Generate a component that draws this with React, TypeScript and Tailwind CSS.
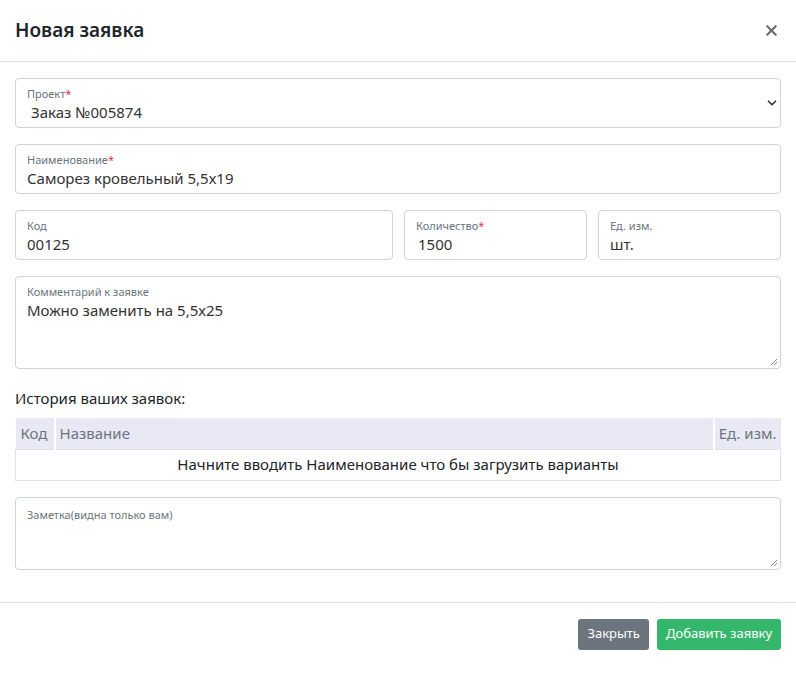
import { ChevronDown, X } from "lucide-react";

const font = { fontFamily: '"Noto Sans", "Open Sans", sans-serif' };

const Grip = () => (
  <svg className="absolute right-[2px] bottom-[2px]" width="8" height="8" viewBox="0 0 8 8">
    <path d="M7 1 L1 7 M7 4 L4 7" stroke="#8a8a8a" strokeWidth="1" />
  </svg>
);

const Field = ({
  label,
  value,
  required,
  className = "",
  valueClass = "",
}: {
  label: string;
  value: string;
  required?: boolean;
  className?: string;
  valueClass?: string;
}) => (
  <div className={`h-[50px] rounded-[4px] border border-[#ced4da] bg-white px-[11px] pt-[8px] ${className}`}>
    <div className="text-[11px] leading-[14px] text-[#6c757d]">
      {label}
      {required && <span className="text-[#dc3545]">*</span>}
    </div>
    <div className={`mt-[1px] text-[15px] leading-[20px] text-[#333] ${valueClass}`}>{value}</div>
  </div>
);

export default function App() {
  return (
    <div className="min-h-[679px] w-[796px] bg-white text-[#212529]" style={font}>
      {/* header */}
      <div className="flex h-[62px] items-center justify-between border-b border-[#dee2e6] px-[15px]">
        <h5 className="text-[19px] font-semibold text-[#212529]">Новая заявка</h5>
        <X size={17} strokeWidth={3} className="mr-[1px] text-[#6c6c6c]" />
      </div>

      {/* body */}
      <div className="flex flex-col gap-[16px] px-[15px] pt-[16px] pb-[32px]">
        <div className="relative">
          <Field label="Проект" value="Заказ №005874" required valueClass="pl-[4px]" />
          <ChevronDown size={14} strokeWidth={3} className="absolute right-[2px] top-[18px] text-[#343a40]" />
        </div>

        <Field label="Наименование" value="Саморез кровельный 5,5х19" required />

        <div className="flex gap-[11px]">
          <Field label="Код" value="00125" className="flex-1" />
          <Field label="Количество" value="1500" required className="w-[183px]" valueClass="pl-[2px]" />
          <Field label="Ед. изм." value="шт." className="w-[183px]" />
        </div>

        <div className="relative h-[93px] rounded-[4px] border border-[#ced4da] px-[11px] pt-[8px]">
          <div className="text-[11px] leading-[14px] text-[#6c757d]">Комментарий к заявке</div>
          <div className="mt-[1px] text-[15px] leading-[20px] text-[#333]">Можно заменить на 5,5х25</div>
          <Grip />
        </div>

        <div>
          <div className="mt-[3px] mb-[10px] text-[15px] leading-[20px] text-[#212529]">История ваших заявок:</div>
          <table className="w-full border-collapse text-[15px] text-[#212529]">
            <thead>
              <tr className="h-[31px] bg-[#e8e9f5] text-left text-[#6c757d]">
                <th className="w-[39px] border-r-2 border-white px-[5px] font-normal">Код</th>
                <th className="px-[4px] font-normal">Название</th>
                <th className="w-[66px] whitespace-nowrap border-l-2 border-white px-[4px] font-normal">Ед. изм.</th>
              </tr>
            </thead>
            <tbody>
              <tr className="h-[31px] border border-[#dee2e6]">
                <td colSpan={3} className="text-center text-[15px]">
                  Начните вводить Наименование что бы загрузить варианты
                </td>
              </tr>
            </tbody>
          </table>
        </div>

        <div className="relative h-[73px] rounded-[4px] border border-[#ced4da] px-[11px] pt-[10px]">
          <div className="text-[11px] leading-[14px] text-[#6c757d]">Заметка(видна только вам)</div>
          <Grip />
        </div>
      </div>

      {/* footer */}
      <div className="flex justify-end gap-[8px] border-t border-[#dee2e6] px-[15px] pt-[16px]">
        <button className="h-[31px] rounded-[3px] bg-[#6c757d] px-[9px] text-[13px] text-white">Закрыть</button>
        <button className="h-[31px] rounded-[3px] bg-[#34b76b] px-[9px] text-[13px] text-white">Добавить заявку</button>
      </div>
    </div>
  );
}
